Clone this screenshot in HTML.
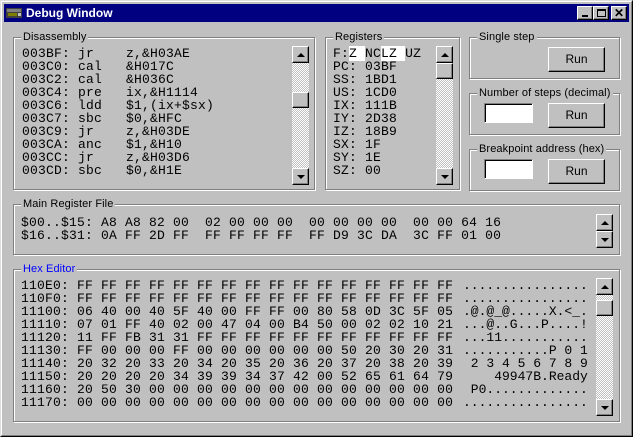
<!DOCTYPE html>
<html><head><style>
*{margin:0;padding:0;box-sizing:border-box}
body{width:633px;height:437px;background:#c0c0c0;overflow:hidden;position:relative;font-family:"Liberation Sans",sans-serif;font-size:12px}
.a{position:absolute}
.win{left:0;top:0;width:633px;height:437px;border:1px solid;border-color:#dfdfdf #000 #000 #dfdfdf}
.win2{left:1px;top:1px;width:631px;height:435px;border:1px solid;border-color:#fff #808080 #808080 #fff}
.title{left:4px;top:4px;width:625px;height:18px;background:#000080;color:#fff;font-weight:bold;font-size:12px;line-height:18px;padding-left:22px}
.grp{border:1px solid #808080;box-shadow:1px 1px 0 #fff, inset 1px 1px 0 #fff}
.lbl{background:#c0c0c0;padding:0 2px;font-size:11px;line-height:13px;color:#000;letter-spacing:0.1px}
.btn{background:#c0c0c0;border:1px solid;border-color:#fff #000 #000 #fff;box-shadow:inset -1px -1px 0 #808080;text-align:center}
.inp{background:#fff;border:1px solid;border-color:#808080 #fff #fff #808080;box-shadow:inset 1px 1px 0 #000}
.mono{font-family:"Liberation Mono",monospace;font-size:13px;letter-spacing:0.2px;line-height:13px;white-space:pre;color:#000}
.track{background:repeating-conic-gradient(#c0c0c0 0 25%,#fff 0 50%) 0 0/2px 2px}
.sb{width:17px;height:17px}
.up::after,.dn::after{content:"";position:absolute;left:4px;border-left:4px solid transparent;border-right:4px solid transparent}
.up::after{top:6px;border-bottom:4px solid #000}
.dn::after{top:6px;border-top:4px solid #000}
.hl{background:#fff}
</style></head><body>
<div class="a win"></div><div class="a win2"></div>
<div class="a title">Debug Window</div>
<svg class="a" style="left:6px;top:8px" width="16" height="10"><rect x="0" y="0" width="16" height="10" fill="#404040"/><rect x="1" y="1" width="14" height="3" fill="#808080"/><rect x="2" y="5" width="9" height="3" fill="#808000"/><rect x="12" y="5" width="3" height="3" fill="#c0c0c0"/></svg>
<div class="a btn" style="left:577px;top:6px;width:16px;height:14px"><div class="a" style="left:4px;top:8px;width:6px;height:2px;background:#000"></div></div>
<div class="a btn" style="left:593px;top:6px;width:16px;height:14px"><div class="a" style="left:3px;top:2px;width:9px;height:8px;border:1px solid #000;border-top-width:2px"></div></div>
<div class="a btn" style="left:611px;top:6px;width:16px;height:14px;font-size:12px;line-height:12px;font-weight:bold">✕</div>

<div class="a grp" style="left:13px;top:37px;width:302px;height:153px"></div>
<div class="a lbl" style="left:21px;top:31px">Disassembly</div>
<div class="a mono" style="left:22px;top:47px">003BF: jr    z,&amp;H03AE
003C0: cal   &amp;H017C
003C2: cal   &amp;H036C
003C4: pre   ix,&amp;H1114
003C6: ldd   $1,(ix+$sx)
003C7: sbc   $0,&amp;HFC
003C9: jr    z,&amp;H03DE
003CA: anc   $1,&amp;H10
003CC: jr    z,&amp;H03D6
003CD: sbc   $0,&amp;H1E</div>
<div class="a track" style="left:292px;top:46px;width:17px;height:139px"></div>
<div class="a btn sb up" style="left:292px;top:46px"></div>
<div class="a btn" style="left:292px;top:92px;width:17px;height:16px"></div>
<div class="a btn sb dn" style="left:292px;top:168px"></div>

<div class="a grp" style="left:325px;top:37px;width:135px;height:153px"></div>
<div class="a lbl" style="left:333px;top:31px">Registers</div>
<div class="a mono" style="left:333px;top:47px">F:<span class="hl">Z </span>NC<span class="hl">LZ </span>UZ
PC: 03BF
SS: 1BD1
US: 1CD0
IX: 111B
IY: 2D38
IZ: 18B9
SX: 1F
SY: 1E
SZ: 00</div>
<div class="a track" style="left:436px;top:46px;width:17px;height:139px"></div>
<div class="a btn sb up" style="left:436px;top:46px"></div>
<div class="a btn" style="left:436px;top:63px;width:17px;height:16px"></div>
<div class="a btn sb dn" style="left:436px;top:168px"></div>

<div class="a grp" style="left:469px;top:37px;width:151px;height:42px"></div>
<div class="a lbl" style="left:477px;top:31px">Single step</div>
<div class="a btn" style="left:548px;top:47px;width:57px;height:25px;line-height:23px">Run</div>

<div class="a grp" style="left:469px;top:93px;width:151px;height:42px"></div>
<div class="a lbl" style="left:477px;top:87px">Number of steps (decimal)</div>
<div class="a inp" style="left:484px;top:103px;width:49px;height:20px"></div>
<div class="a btn" style="left:548px;top:103px;width:57px;height:25px;line-height:23px">Run</div>

<div class="a grp" style="left:469px;top:149px;width:151px;height:42px"></div>
<div class="a lbl" style="left:477px;top:143px">Breakpoint address (hex)</div>
<div class="a inp" style="left:484px;top:159px;width:49px;height:20px"></div>
<div class="a btn" style="left:548px;top:159px;width:57px;height:25px;line-height:23px">Run</div>

<div class="a grp" style="left:13px;top:204px;width:607px;height:51px"></div>
<div class="a lbl" style="left:21px;top:198px">Main Register File</div>
<div class="a mono" style="left:21px;top:216px">$00..$15: A8 A8 82 00  02 00 00 00  00 00 00 00  00 00 64 16
$16..$31: 0A FF 2D FF  FF FF FF FF  FF D9 3C DA  3C FF 01 00</div>
<div class="a btn sb up" style="left:596px;top:214px"></div>
<div class="a btn sb dn" style="left:596px;top:231px"></div>

<div class="a grp" style="left:13px;top:269px;width:607px;height:153px"></div>
<div class="a lbl" style="left:21px;top:263px;color:#0000ff">Hex Editor</div>
<div class="a mono" style="left:21px;top:279px">110E0: FF FF FF FF FF FF FF FF FF FF FF FF FF FF FF FF
110F0: FF FF FF FF FF FF FF FF FF FF FF FF FF FF FF FF
11100: 06 40 00 40 5F 40 00 FF FF 00 80 58 0D 3C 5F 05
11110: 07 01 FF 40 02 00 47 04 00 B4 50 00 02 02 10 21
11120: 11 FF FB 31 31 FF FF FF FF FF FF FF FF FF FF FF
11130: FF 00 00 00 FF 00 00 00 00 00 00 50 20 30 20 31
11140: 20 32 20 33 20 34 20 35 20 36 20 37 20 38 20 39
11150: 20 20 20 20 34 39 39 34 37 42 00 52 65 61 64 79
11160: 20 50 30 00 00 00 00 00 00 00 00 00 00 00 00 00
11170: 00 00 00 00 00 00 00 00 00 00 00 00 00 00 00 00</div>
<div class="a mono" style="left:463px;top:279px;letter-spacing:0">................
................
.@.@_@.....X.&lt;_.
...@..G...P....!
...11...........
...........P 0 1
 2 3 4 5 6 7 8 9
    49947B.Ready
 P0.............
................</div>
<div class="a track" style="left:596px;top:278px;width:17px;height:138px"></div>
<div class="a btn sb up" style="left:596px;top:278px"></div>
<div class="a btn" style="left:596px;top:300px;width:17px;height:16px"></div>
<div class="a btn sb dn" style="left:596px;top:399px"></div>
</body></html>
